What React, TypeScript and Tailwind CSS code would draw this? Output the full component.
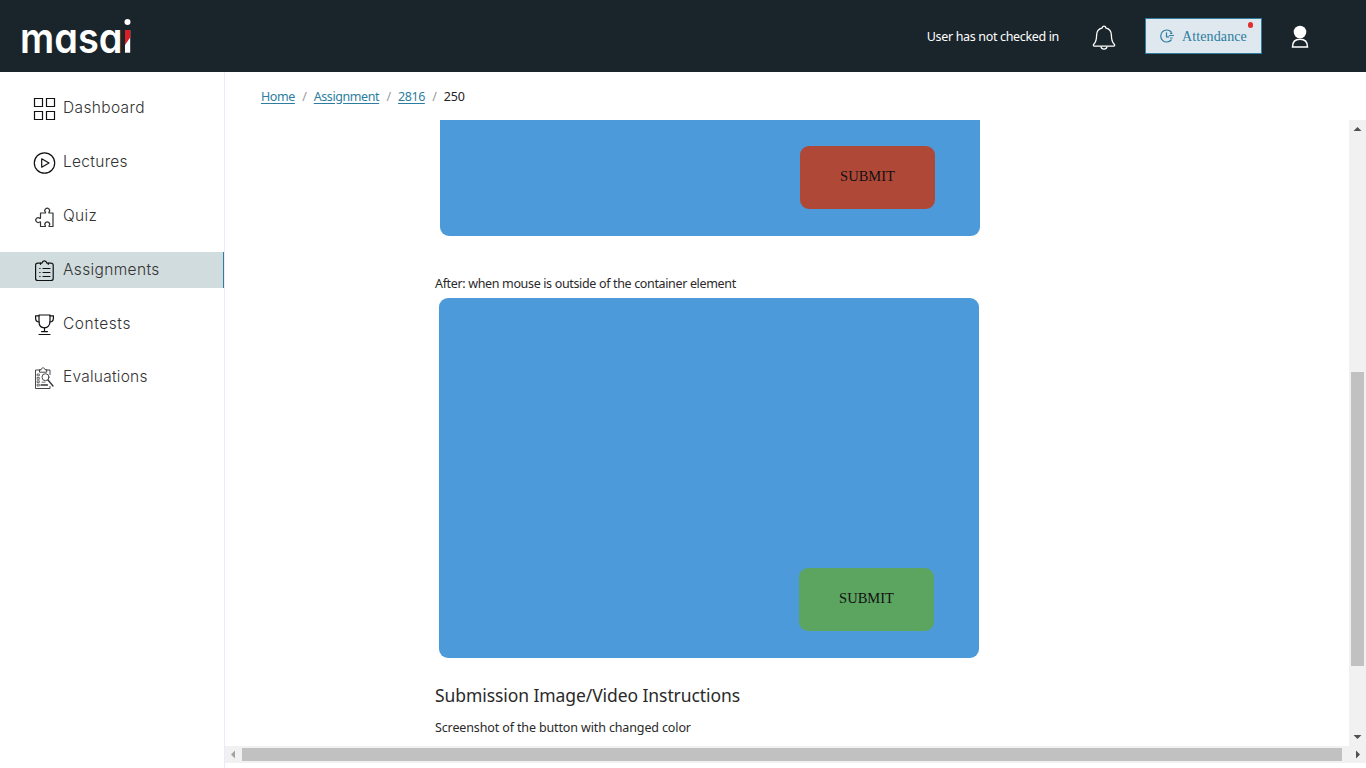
import React from "react";

const ui = "font-['Noto_Sans','Open_Sans',sans-serif]";

function Logo() {
  return (
    <svg width="116" height="64" viewBox="-2 -14 116 64" className="block">
      <text
        x="-1"
        y="34.500"
        fontSize="42"
        textLength="102.500"
        lengthAdjust="spacingAndGlyphs"
        className="fill-white font-['Inter',sans-serif] font-semibold [font-feature-settings:'cv11']"
      >
        masa
      </text>
      <circle cx="106.500" cy="4" r="3" fill="#fff" />
      <rect x="104" y="12" width="5.200" height="22.700" fill="#fff" />
      <path d="M104 12h5.200v7.500L104 27z" fill="#dc1f26" />
    </svg>
  );
}

function Icon({ children }: { children: React.ReactNode }) {
  return (
    <svg width="22" height="24" viewBox="0 0 22 24" fill="none" stroke="#111" strokeWidth="1.2" strokeLinecap="round" strokeLinejoin="round" className="mt-[1px] shrink-0 overflow-visible">
      {children}
    </svg>
  );
}

const items = [
  {
    label: "Dashboard",
    cls: "tracking-[0.36px]",
    icon: (
      <g strokeLinejoin="miter">
        <path d="M1.500 1.500h8v8h-8zM13.500 1.500h8v8h-8zM1.500 14.500h8v8h-8zM13.500 14.500h8v8h-8z" />
      </g>
    ),
  },
  {
    label: "Lectures",
    cls: "tracking-[0.3px]",
    icon: (
      <>
        <circle cx="11.500" cy="12" r="10.200" />
        <path d="M8.700 7.800v8.400l7.300-4.200z" />
      </>
    ),
  },
  {
    label: "Quiz",
    cls: "tracking-[0.3px]",
    icon: (
      <path
        stroke="#333"
        strokeWidth="1.200"
        d="M7.500 8h4.600c.5 0 .6-.4.300-.8a2.400 2.400 0 1 1 3.600 0c-.3.400-.2.800.3.800h3.700v13.500h-3.500c-.5 0-.6-.4-.3-.8a2.400 2.400 0 1 0-3.900 0c.3.400.2.800-.3.800H7.500v-4.300c0-.5-.4-.6-.8-.3a2.400 2.400 0 1 1 0-3.700c.4.300.8.200.8-.3z"
      />
    ),
  },
  {
    label: "Assignments",
    cls: "tracking-[0.36px]",
    icon: (
      <>
        <path d="M7.500 4.200H4.800c-1.300 0-2.200.8-2.200 2v13.300c0 1.200.9 2 2.200 2h13.200c1.300 0 2.200-.8 2.200-2V6.200c0-1.200-.9-2-2.200-2h-2.700" />
        <path d="M7.500 5.300V4.200h1.500c.6-3 4.200-3 4.800 0h1.500v1.100" />
        <path d="M10 9.500h7M10 13.500h7M10 17.500h7M6.700 9.500h.4M6.700 13.500h.4M6.700 17.500h.4" />
      </>
    ),
  },
  {
    label: "Contests",
    cls: "tracking-[0.55px]",
    icon: (
      <>
        <path d="M6 2h11v6.500c0 4-2.300 6.300-5.500 6.300S6 12.500 6 8.500z" />
        <path d="M6 2.800H2.600v2.500c0 2.200 1.500 3.700 3.700 3.700M17 2.800h3.400v2.500c0 2.200-1.500 3.700-3.700 3.700M11.500 15v3.500M8.500 18.600h6M6 21.500h11" />
      </>
    ),
  },
  {
    label: "Evaluations",
    cls: "tracking-[0.24px]",
    icon: (
      <g strokeWidth="0.900" stroke="#333">
        <path d="M7 4H2.500v18.500h14.500v-2M17 8.500V4h-3.500" />
        <path d="M6.500 5.800V3.700h1.700c.5-2.500 3.300-2.500 3.800 0h1.700v2.100z" />
        <circle cx="12.500" cy="11.200" r="3.500" />
        <path d="M15 14l5 6M8 19h6.500" strokeWidth="1.300" />
        <path d="M4.500 8h1.800v1.800h-1.800zM4.500 11.500h1.800v1.800h-1.800zM4.500 14.800h1.800v1.800h-1.800zM4.500 18.200h1.800v1.800h-1.800zM9 16.200h3" strokeWidth="0.700" />
      </g>
    ),
  },
];

function Header() {
  return (
    <header className="flex h-[72px] shrink-0 items-center bg-[#1a252b] pl-[19px] pr-[56px]">
      <Logo />
      <span className={`${ui} ml-auto mt-[2px] whitespace-nowrap text-[12.500px] tracking-[-0.340px] text-white`}>User has not checked in</span>
      <svg width="24" height="26" viewBox="0 0 24 26" fill="none" stroke="#fff" strokeWidth="1.300" strokeLinejoin="round" className="ml-[33px] mt-[3px]">
        <path d="M10.300 2.800a1.700 1.700 0 0 1 3.400 0c3.700.9 5.700 3.800 5.700 7.400 0 5.200 1 7.300 2.900 9.100.7.700.3 1.900-.7 1.900H2.400c-1 0-1.400-1.200-.7-1.900 1.900-1.800 2.900-3.900 2.900-9.100 0-3.600 2-6.500 5.700-7.400z" />
        <path d="M9 21.500c.4 3.500 5.600 3.500 6 0" />
      </svg>
      <div className="relative ml-[29px] flex h-[36px] w-[117px] items-center border border-[#2c7da0] bg-[#dfe8ee] pl-[13px] text-[#2c7da0]">
        <svg width="16" height="16" viewBox="0 0 16 16" fill="none" stroke="currentColor" strokeWidth="1.200" strokeLinecap="round">
          <path d="M12.200 4A6 6 0 1 0 12.200 12M7.500 4.800v4h2.300M10.500 7.500h4M11.500 10h1.700M11.500 5.300h1.500" />
        </svg>
        <span className="ml-[7px] font-['Liberation_Serif',serif] text-[14px] tracking-[0.120px]">Attendance</span>
        <span className="absolute right-[8px] top-[3px] h-[6px] w-[5px] rounded-full bg-[#e03131]" />
      </div>
      <svg width="20" height="24" viewBox="0 0 20 24" className="ml-[28px] mt-[1px]">
        <circle cx="10" cy="7" r="6.300" fill="#fff" />
        <path d="M2.500 22c0-5 2.800-7.700 7.500-7.700s7.500 2.700 7.500 7.700z" fill="none" stroke="#fff" strokeWidth="1.500" />
      </svg>
    </header>
  );
}

function Sidebar() {
  return (
    <nav className="flex w-[225px] shrink-0 flex-col gap-[18px] border-r border-[#ebebf7] pt-[18px]">
      {items.map((it) => (
        <div
          key={it.label}
          className={`flex h-[36px] items-center pl-[33px] last:-mt-[1px] ${
            it.label === "Assignments" ? "border-r border-[#2c7da0] bg-[#d0dcdd]" : ""
          }`}
        >
          <Icon>{it.icon}</Icon>
          <span className={`ml-[8px] font-['Inter',sans-serif] text-[15.500px] font-light text-[#333] ${it.cls}`}>{it.label}</span>
        </div>
      ))}
    </nav>
  );
}

function Breadcrumb() {
  const link = "text-[#2c7da0] underline underline-offset-2";
  return (
    <div className={`${ui} flex h-[48px] shrink-0 items-center gap-[7.300px] pl-[36px] pt-[2px] text-[12.500px] tracking-[-0.420px] text-[#9a9a9a]`}>
      <span className={link}>Home</span>
      <span>/</span>
      <span className={link}>Assignment</span>
      <span>/</span>
      <span className={link}>2816</span>
      <span>/</span>
      <span className="tracking-[-0.150px] text-[#222]">250</span>
    </div>
  );
}

function Submit({ color }: { color: string }) {
  return (
    <div className={`flex h-[63px] w-[135px] items-center justify-center rounded-[9px] pb-[1px] font-['Liberation_Serif',serif] text-[14.500px] text-[#111] ${color}`}>
      SUBMIT
    </div>
  );
}

function Article() {
  return (
    <div className={`${ui} h-full flex-1 overflow-hidden pl-[210px] text-[#2a2a2a]`}>
      <div className="ml-[5px] flex h-[116px] w-[540px] justify-end rounded-b-[9px] bg-[#4c9ad9] pr-[45px] pt-[26px]">
        <Submit color="bg-[#b04838]" />
      </div>
      <p className="mt-[38px] h-[20px] whitespace-nowrap text-[12.500px] leading-[20px] tracking-[-0.345px]">After: when mouse is outside of the container element</p>
      <div className="ml-[4px] mt-[4px] flex h-[360px] w-[540px] items-end justify-end rounded-[9px] bg-[#4c9ad9] pb-[27px] pr-[45px]">
        <Submit color="bg-[#5ca560]" />
      </div>
      <h2 className="mt-[24px] h-[26px] whitespace-nowrap text-[17.500px] leading-[26px] tracking-[-0.080px]">Submission Image/Video Instructions</h2>
      <p className="mt-[10px] h-[20px] whitespace-nowrap text-[12.500px] leading-[20px] tracking-[-0.130px]">Screenshot of the button with changed color</p>
    </div>
  );
}

export default function App() {
  return (
    <div className="flex h-[768px] w-[1366px] flex-col overflow-hidden bg-white">
      <Header />
      <div className="flex min-h-0 flex-1">
        <Sidebar />
        <main className="flex min-w-0 flex-1 flex-col">
          <Breadcrumb />
          <div className="flex h-[626px] shrink-0">
            <Article />
            <div className="flex w-[17px] shrink-0 flex-col items-center bg-[#f1f1f1]">
              <svg width="17" height="17" viewBox="0 0 17 17" fill="#505050">
                <path d="M4.500 11 8.500 7l4 4z" />
              </svg>
              <div className="mt-[235px] h-[294px] w-[13px] bg-[#c1c1c1]" />
              <svg width="17" height="17" viewBox="0 0 17 17" fill="#505050" className="mt-auto">
                <path d="M4.500 6h8l-4 4z" />
              </svg>
            </div>
          </div>
          <div className="flex h-[17px] shrink-0 items-center bg-[#f1f1f1]">
            <svg width="17" height="17" viewBox="0 0 17 17" fill="#a3a3a3">
              <path d="M10 4.500v8l-4-4z" />
            </svg>
            <div className="h-[13px] w-[1100px] bg-[#c1c1c1]" />
            <svg width="17" height="17" viewBox="0 0 17 17" fill="#505050" className="ml-[6px]">
              <path d="M8 4.500v8l4-4z" />
            </svg>
          </div>
        </main>
      </div>
    </div>
  );
}
